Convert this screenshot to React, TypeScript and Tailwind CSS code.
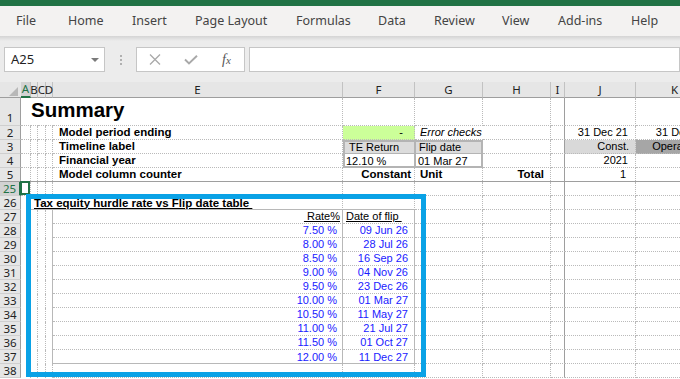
import type { ReactNode } from "react";

type Line = "dot" | "solid" | "none" | "frz";
type Spec = { t?: ReactNode; r?: Line; b?: Line; c?: string };

const COLS = [
  "w-[10px]",
  "w-[7px]",
  "w-[8px]",
  "w-[7px]",
  "w-[290px]",
  "w-[72px]",
  "w-[68px]",
  "w-[68px]",
  "w-[14px]",
  "w-[71px]",
  "w-[78px]",
];
const LETTERS = ["A", "B", "C", "D", "E", "F", "G", "H", "I", "J", "K"];

// cell edge styles, right-bottom
const LINES: Record<string, string> = {
  "dot-dot": "border-r border-b border-dotted border-[#bababa]",
  "dot-none": "border-r border-dotted border-[#bababa]",
  "dot-solid": "border-r border-dotted border-[#bababa] shadow-[inset_0_-1px_0_#b8b8b8]",
  "none-dot": "border-b border-dotted border-[#bababa]",
  "none-none": "",
  "none-solid": "shadow-[inset_0_-1px_0_#b8b8b8]",
  "solid-dot": "border-b border-dotted border-[#bababa] shadow-[inset_-1px_0_0_#b8b8b8]",
  "solid-none": "shadow-[inset_-1px_0_0_#b8b8b8]",
  "solid-solid": "shadow-[inset_-1px_0_0_#b8b8b8,inset_0_-1px_0_#b8b8b8]",
  "frz-dot": "border-b border-dotted border-[#bababa] shadow-[inset_-1px_0_0_#9e9e9e]",
  "frz-none": "shadow-[inset_-1px_0_0_#9e9e9e]",
  "frz-solid": "shadow-[inset_-1px_0_0_#9e9e9e,inset_0_-1px_0_#b8b8b8]",
};

const TABS: [string, string][] = [
  ["File", "w-[52px]"],
  ["Home", "w-[64px]"],
  ["Insert", "w-[63px]"],
  ["Page Layout", "w-[101px]"],
  ["Formulas", "w-[82px]"],
  ["Data", "w-[56px]"],
  ["Review", "w-[68px]"],
  ["View", "w-[56px]"],
  ["Add-ins", "w-[73px]"],
  ["Help", "w-[40px]"],
];

const FLIPS: [string, string][] = [
  ["7.50 %", "09 Jun 26"],
  ["8.00 %", "28 Jul 26"],
  ["8.50 %", "16 Sep 26"],
  ["9.00 %", "04 Nov 26"],
  ["9.50 %", "23 Dec 26"],
  ["10.00 %", "01 Mar 27"],
  ["10.50 %", "11 May 27"],
  ["11.00 %", "21 Jul 27"],
  ["11.50 %", "01 Oct 27"],
  ["12.00 %", "11 Dec 27"],
];

function Over({ children, className = "" }: { children: ReactNode; className?: string }) {
  return <span className={`relative z-[1] ${className}`}>{children}</span>;
}

function Row({
  n,
  cells = {},
  h = "h-[14px]",
  sel,
  last,
  top,
}: {
  n: string;
  cells?: Record<number, Spec>;
  h?: string;
  sel?: boolean;
  last?: boolean;
  top?: boolean;
}) {
  const head = sel
    ? "bg-[#d2d2d2] text-[#217346] border-r-2 border-r-[#217346]"
    : "bg-[#e6e6e6] text-[#222] border-r border-r-[#9e9e9e]";
  return (
    <div className={`flex ${h}`}>
      <div
        className={`w-[21px] shrink-0 flex justify-center font-['Noto_Sans',sans-serif] text-[11.5px] leading-[13px] ${
          top ? "items-end pb-[1px]" : "items-center"
        } ${head} ${last ? "" : "border-b border-b-[#cfcfcf]"}`}
      >
        {n}
      </div>
      {COLS.map((w, i) => {
        const s = cells[i] ?? {};
        const r = s.r ?? (i === 8 ? "frz" : "dot");
        const b = s.b ?? (last ? "none" : "dot");
        return (
          <div
            key={i}
            className={`${w} shrink-0 flex items-center whitespace-nowrap leading-[13px] ${LINES[`${r}-${b}`]} ${s.c ?? ""}`}
          >
            {s.t}
          </div>
        );
      })}
    </div>
  );
}

function Ribbon() {
  return (
    <div className="font-['Noto_Sans',sans-serif]">
      <div className="h-[6px] bg-[#217346]" />
      <div className="h-[30px] bg-[#f3f2f1] flex items-center pl-[16px] text-[12.5px] text-[#444]">
        {TABS.map(([t, w]) => (
          <div key={t} className={`${w} shrink-0`}>
            {t}
          </div>
        ))}
      </div>
      <div className="h-[46px] bg-[#ececec] flex flex-col">
        <div className="h-[5px] bg-linear-to-b from-[#d4d4d4] to-[#ececec]" />
        <div className="flex pt-[6px] pl-[4px]">
          <div className="w-[101px] h-[25px] bg-white border border-[#c6c6c6] flex items-center justify-between pl-[6px] pr-[5px] text-[13px] text-[#222]">
            <span>A25</span>
            <svg width="8" height="4" viewBox="0 0 8 4">
              <polygon points="0,0 8,0 4,4" fill="#7a7a7a" />
            </svg>
          </div>
          <div className="w-[31px] h-[25px] flex flex-col items-center justify-center gap-[2px]">
            <span className="w-[2px] h-[2px] bg-[#b0b0b0]" />
            <span className="w-[2px] h-[2px] bg-[#b0b0b0]" />
            <span className="w-[2px] h-[2px] bg-[#b0b0b0]" />
          </div>
          <div className="w-[109px] h-[25px] bg-white border border-[#c6c6c6] flex items-center pl-[12px]">
            <svg width="12" height="11" viewBox="0 0 12 11" className="mr-[23px]">
              <path d="M1 0.5 L11 10.5 M11 0.5 L1 10.5" stroke="#a9a9a9" strokeWidth="1.3" />
            </svg>
            <svg width="14" height="10" viewBox="0 0 14 10" className="mr-[24px]">
              <path d="M1 4.5 L5 8.5 L13 0.8" stroke="#a9a9a9" strokeWidth="1.9" fill="none" />
            </svg>
            <span className="italic font-['Liberation_Serif',serif] text-[14px] text-[#555] leading-none">
              f<span className="text-[11px]">x</span>
            </span>
          </div>
          <div className="flex-1 ml-[4px] h-[25px] bg-white border border-[#c6c6c6]" />
        </div>
      </div>
    </div>
  );
}

function ColumnHeader() {
  return (
    <div className="flex h-[16px] bg-[#e6e6e6] font-['Noto_Sans',sans-serif] text-[11.5px] text-[#222]">
      <div className="w-[21px] shrink-0 flex items-end justify-end pr-[3px] pb-[1px] border-b border-b-[#9e9e9e]">
        <svg width="9" height="9" viewBox="0 0 9 9">
          <polygon points="9,0 9,9 0,9" fill="#b8b8b8" />
        </svg>
      </div>
      {COLS.map((w, i) => (
        <div
          key={i}
          className={`${w} shrink-0 flex items-center justify-center border-r border-r-[#c2c2c2] ${
            i === 0
              ? "bg-[#d2d2d2] text-[#217346] border-b-2 border-b-[#217346]"
              : "border-b border-b-[#9e9e9e]"
          }`}
        >
          {LETTERS[i]}
        </div>
      ))}
    </div>
  );
}

export default function App() {
  const boldCell = "font-bold text-[11.5px]";
  const left: Record<number, Spec> = {
    0: { b: "none" },
    1: { b: "none" },
    2: { b: "none" },
  };

  return (
    <div className="w-[680px] h-[379px] overflow-hidden bg-white font-['Liberation_Sans',Arial,sans-serif] text-[11px] text-black">
      <Ribbon />
      <ColumnHeader />

      <Row
        n="1"
        h="h-[28px]"
        top
        cells={{
          0: { r: "none" },
          1: {
            r: "none",
            c: "items-end pb-[4px]",
            t: <Over className="font-bold text-[20.5px] leading-[22px]">Summary</Over>,
          },
          2: { r: "none" },
          3: { r: "none" },
        }}
      />
      <Row
        n="2"
        cells={{
          4: { t: "Model period ending", c: `${boldCell} pl-[6px]` },
          5: { t: "-", c: "bg-[#ccff99] justify-end pr-[11px]" },
          6: { r: "none", t: <Over className="italic">Error checks</Over>, c: "pl-[5px]" },
          9: { t: "31 Dec 21", c: "justify-end pr-[7px]" },
          10: { t: "31 Dec 21", c: "justify-end pr-[7px]" },
        }}
      />
      <Row
        n="3"
        cells={{
          4: { t: "Timeline label", c: `${boldCell} pl-[6px]` },
          5: {
            r: "none",
            b: "none",
            t: "TE Return",
            c: "pl-[6px] bg-[#dcdcdc] shadow-[inset_2px_2px_0_#b4b4b4,inset_-1px_0_0_#b4b4b4,inset_0_-1px_0_#b4b4b4]",
          },
          6: {
            r: "none",
            b: "none",
            t: "Flip date",
            c: "pl-[4px] bg-[#dcdcdc] shadow-[inset_1px_2px_0_#b4b4b4,inset_-2px_0_0_#b4b4b4,inset_0_-1px_0_#b4b4b4]",
          },
          9: { t: "Const.", c: "justify-end pr-[6px] bg-[#d9d9d9]" },
          10: { t: "Operations", c: "justify-end pr-[7px] bg-[#a6a6a6]" },
        }}
      />
      <Row
        n="4"
        cells={{
          4: { t: "Financial year", c: `${boldCell} pl-[6px]` },
          5: {
            r: "none",
            b: "none",
            t: "12.10 %",
            c: "pl-[3px] shadow-[inset_2px_-2px_0_#b4b4b4,inset_-1px_0_0_#b4b4b4]",
          },
          6: {
            r: "none",
            b: "none",
            t: "01 Mar 27",
            c: "pl-[3px] shadow-[inset_1px_-2px_0_#b4b4b4,inset_-2px_0_0_#b4b4b4]",
          },
          9: { t: "2021", c: "justify-end pr-[7px]" },
        }}
      />
      <Row
        n="5"
        h="h-[13px]"
        last
        cells={{
          4: { t: "Model column counter", c: `${boldCell} pl-[6px]` },
          5: { t: "Constant", c: `${boldCell} justify-end pr-[3px]` },
          6: { t: "Unit", c: `${boldCell} pl-[5px]` },
          7: { t: "Total", c: `${boldCell} justify-end pr-[6px]` },
          9: { t: "1", c: "justify-end pr-[9px]" },
        }}
      />
      <div className="h-px bg-[#9e9e9e]" />
      <Row
        n="25"
        sel
        cells={{
          0: {
            c: "relative",
            t: <div className="absolute -left-[1px] -top-[1px] right-0 bottom-0 border-2 border-[#217346]" />,
          },
        }}
      />

      <div className="relative">
        <Row
          n="26"
          cells={{
            0: { b: "none" },
            1: {
              r: "none",
              b: "solid",
              c: "pl-[3px]",
              t: (
                <Over className="font-bold text-[11.5px] underline decoration-1 underline-offset-[1px]">
                  Tax equity hurdle rate vs Flip date table&nbsp;
                </Over>
              ),
            },
            2: { r: "none", b: "solid" },
            3: { r: "none", b: "solid" },
            4: { b: "solid" },
            5: { b: "solid" },
          }}
        />
        <Row
          n="27"
          cells={{
            ...left,
            3: { r: "solid", b: "none" },
            4: {
              r: "solid",
              t: <span className="underline decoration-1 underline-offset-[1px]">&nbsp;Rate%</span>,
              c: "justify-end pr-[3px]",
            },
            5: {
              r: "solid",
              t: <span className="underline decoration-1 underline-offset-[1px]">Date of flip&nbsp;</span>,
              c: "pl-[3px]",
            },
          }}
        />
        {FLIPS.map(([rate, date], k) => (
          <Row
            key={rate}
            n={String(28 + k)}
            cells={{
              ...left,
              3: { r: "solid", b: "none" },
              4: {
                r: "solid",
                b: k === FLIPS.length - 1 ? "solid" : "dot",
                t: rate,
                c: "justify-end pr-[6px] text-[#1a1aff]",
              },
              5: {
                r: "solid",
                b: k === FLIPS.length - 1 ? "solid" : "dot",
                t: date,
                c: "justify-end pr-[7px] text-[#1a1aff]",
              },
            }}
          />
        ))}
        <Row n="38" cells={{ ...left, 3: { b: "none" } }} />

        <div className="absolute left-[26px] -top-[2px] w-[400px] h-[183px] border-[5px] border-[#0aa2e6] pointer-events-none" />
      </div>
    </div>
  );
}
